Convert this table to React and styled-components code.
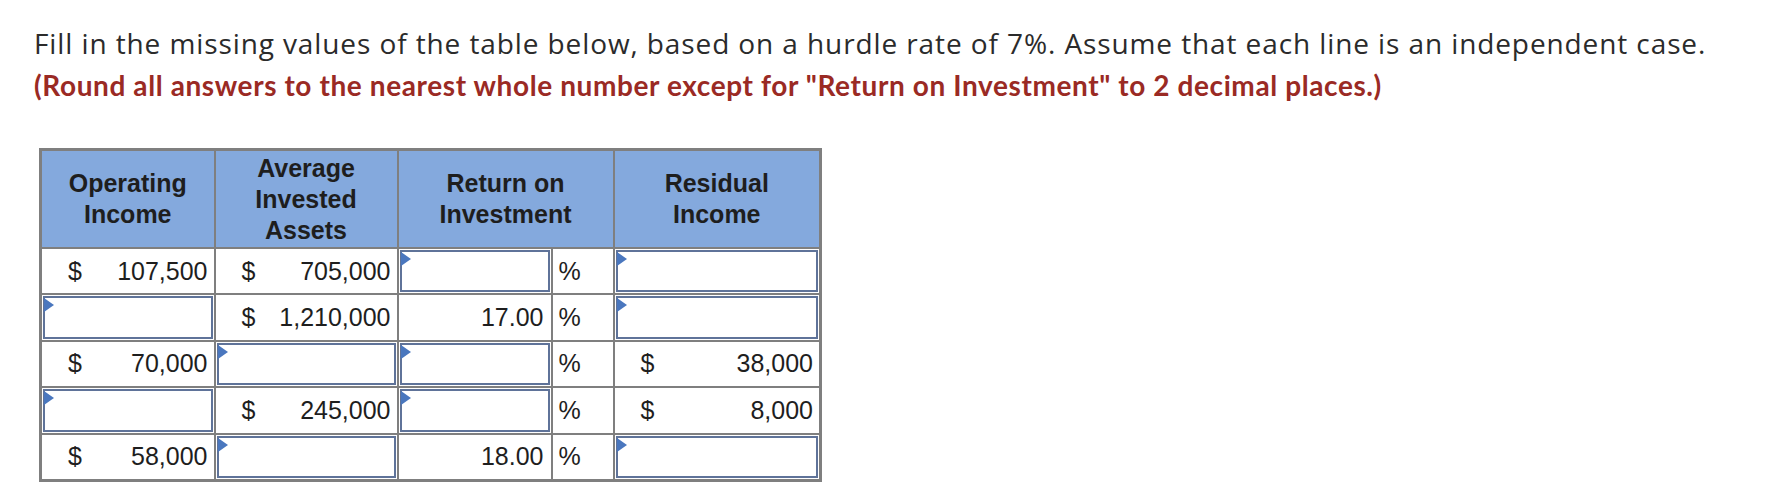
import styled, {createGlobalStyle} from 'styled-components'

const GlobalStyle = createGlobalStyle`
  body {
    margin: 0;
    background: #ffffff;
    font-family: "Open Sans", "Liberation Sans", sans-serif;
  }
`

const rows = [
  {op: '107,500', assets: '705,000', roi: null, ri: null},
  {op: null, assets: '1,210,000', roi: '17.00', ri: null},
  {op: '70,000', assets: null, roi: null, ri: '38,000'},
  {op: null, assets: '245,000', roi: null, ri: '8,000'},
  {op: '58,000', assets: null, roi: '18.00', ri: null},
]

const Page = styled.div`
  padding: 22px 34px;
`

const Intro = styled.p`
  margin: 0;
  font-size: 28px;
  line-height: 42px;
  letter-spacing: 0.9px;
  color: #2b2b2b;
  white-space: nowrap;
`

const Note = styled(Intro)`
  font-family: Lato, "Open Sans", sans-serif;
  font-weight: 700;
  letter-spacing: 0.6px;
  color: #9a2a24;
`

const Table = styled.table`
  margin: 42px 0 0 5px;
  border-collapse: collapse;
  border: 3px solid #7f7f7f;
  font-family: "Liberation Sans", Arial, sans-serif;
  table-layout: fixed;
`

const Head = styled.th`
  background: #84a9dd;
  border: 2px solid #7f7f7f;
  height: 96px;
  padding: 0;
  font-size: 25px;
  line-height: 31px;
  font-weight: 700;
  color: #1e1e1e;
  text-align: center;
  vertical-align: middle;
`

const Cell = styled.td`
  border: 2px solid #7f7f7f;
  height: 42.4px;
  padding: 0;
  font-size: 25px;
  color: #1e1e1e;
  vertical-align: middle;
`

const Money = styled.div`
  display: flex;
  justify-content: space-between;
  align-items: center;
  padding: 0 6px 0 26px;
`

const Value = styled.div`
  text-align: right;
  padding-right: 7px;
`

const Percent = styled.div`
  padding-left: 6px;
`

const Entry = styled.div`
  position: relative;
  height: 38.4px;
  margin: 1px;
  border: 2px solid #5f7399;
  background: #fff;
`

const Flag = styled.span`
  position: absolute;
  top: 0;
  left: -1px;
  width: 0;
  height: 0;
  border-top: 7px solid transparent;
  border-bottom: 7px solid transparent;
  border-left: 10px solid #4a77be;
`

const InputCell = () => (
  <Entry>
    <Flag />
  </Entry>
)

const MoneyCell = ({value}) => (
  <Money>
    <span>$</span>
    <span>{value}</span>
  </Money>
)

export default function App() {
  return (
    <Page>
      <GlobalStyle />
      <Intro>
        Fill in the missing values of the table below, based on a hurdle rate of 7%. Assume that each line is an
        independent case.
      </Intro>
      <Note>
        (Round all answers to the nearest whole number except for "Return on Investment" to 2 decimal places.)
      </Note>
      <Table>
        <colgroup>
          <col style={{width: 174}} />
          <col style={{width: 183}} />
          <col style={{width: 154}} />
          <col style={{width: 62}} />
          <col style={{width: 207}} />
        </colgroup>
        <thead>
          <tr>
            <Head>
              Operating
              <br />
              Income
            </Head>
            <Head>
              Average
              <br />
              Invested
              <br />
              Assets
            </Head>
            <Head colSpan={2}>
              Return on
              <br />
              Investment
            </Head>
            <Head>
              Residual
              <br />
              Income
            </Head>
          </tr>
        </thead>
        <tbody>
          {rows.map((r, i) => (
            <tr key={i}>
              <Cell>{r.op ? <MoneyCell value={r.op} /> : <InputCell />}</Cell>
              <Cell>{r.assets ? <MoneyCell value={r.assets} /> : <InputCell />}</Cell>
              <Cell>{r.roi ? <Value>{r.roi}</Value> : <InputCell />}</Cell>
              <Cell>
                <Percent>%</Percent>
              </Cell>
              <Cell>{r.ri ? <MoneyCell value={r.ri} /> : <InputCell />}</Cell>
            </tr>
          ))}
        </tbody>
      </Table>
    </Page>
  )
}
